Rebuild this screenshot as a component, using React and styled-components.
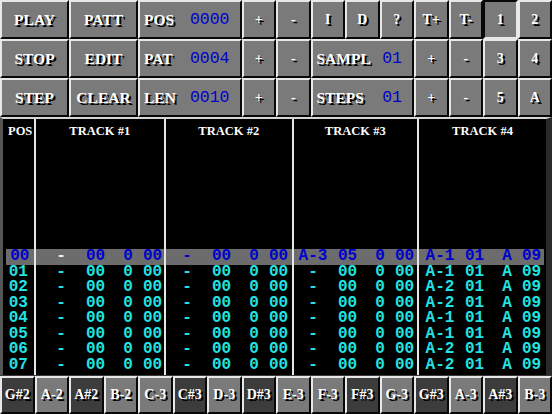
import React from "react";
import styled, { createGlobalStyle } from "styled-components";

const FACE = "#7a7a7a";
const LIGHT = "#e8e8e8";
const DARK = "#080808";
const CYAN = "#22e2e2";
const BLUE = "#0000cc";

const GlobalStyle = createGlobalStyle`
  html, body {
    margin: 0;
    padding: 0;
    background: #000;
  }
  body {
    width: 552px;
    height: 414px;
    overflow: hidden;
  }
`;

const Screen = styled.div`
  width: 552px;
  height: 414px;
  display: flex;
  flex-direction: column;
  background: #000;
  overflow: hidden;
`;

const ControlGrid = styled.div`
  display: grid;
  grid-template-columns: repeat(16, 34.5px);
  grid-template-rows: repeat(3, 39px);
  background: ${FACE};
`;

const Btn = styled.div`
  grid-column: span ${(p) => p.$span || 1};
  box-sizing: border-box;
  border-style: solid;
  border-width: 2px;
  border-color: ${(p) =>
    p.$pressed
      ? `${DARK} ${LIGHT} ${LIGHT} ${DARK}`
      : `${LIGHT} ${DARK} ${DARK} ${LIGHT}`};
  background: ${FACE};
  display: flex;
  align-items: center;
  justify-content: center;
  font-family: "Liberation Serif", serif;
  font-weight: 700;
  font-size: ${(p) => (p.$small ? 14 : 15.5)}px;
  color: #fff;
  text-shadow: 2px 2px 0 #000;
  white-space: nowrap;
`;

const ValueBox = styled(Btn)`
  justify-content: space-between;
  padding: 0 10px 0 4px;
`;

const Value = styled.span`
  font-family: "Liberation Mono", monospace;
  font-weight: 400;
  font-size: 16.5px;
  color: ${BLUE};
  text-shadow: none;
`;

const Pattern = styled.div`
  display: flex;
  height: 258px;
  box-sizing: border-box;
  border-top: 2px solid #d6d6d6;
  border-left: 3px solid #555;
  border-right: 6px solid #2a2a2a;
  background: #000;
`;

const Divider = styled.div`
  width: 2px;
  flex: none;
  background: #e6e6e6;
`;

const Column = styled.div`
  width: ${(p) => p.$w}px;
  flex: none;
  display: flex;
  flex-direction: column;
`;

const Header = styled.div`
  height: 130px;
  box-sizing: border-box;
  padding: 5px 0 0 ${(p) => (p.$left ? 5 : 0)}px;
  text-align: ${(p) => (p.$left ? "left" : "center")};
  font-family: "Liberation Serif", serif;
  font-weight: 700;
  font-size: 12.5px;
  line-height: 15px;
  color: #fff;
`;

const Row = styled.div`
  height: 15.5px;
  line-height: 15.5px;
  display: flex;
  justify-content: ${(p) => (p.$center ? "center" : "flex-start")};
  box-sizing: border-box;
  padding-left: ${(p) => p.$pad || 0}px;
  margin-left: ${(p) => p.$ml || 0}px;
  margin-right: ${(p) => p.$mr || 0}px;
  font-family: "Liberation Mono", monospace;
  font-weight: 700;
  font-size: 16px;
  color: ${(p) => (p.$current ? BLUE : CYAN)};
  background: ${(p) => (p.$current ? "#6c6c6c" : "transparent")};
  white-space: pre;
`;

const Cell = styled.span`
  flex: none;
  width: ${(p) => p.$w}px;
  margin-left: ${(p) => p.$ml || 0}px;
  text-align: ${(p) => (p.$center ? "center" : "left")};
  color: ${(p) => p.$color || "inherit"};
`;

const Keyboard = styled.div`
  display: grid;
  grid-template-columns: repeat(16, 34.5px);
  height: 39px;
  box-sizing: border-box;
  border-top: 1px solid #3a3a3a;
  background: #000;
`;

const Key = styled.div`
  box-sizing: border-box;
  border-style: solid;
  border-width: 2px;
  border-color: ${LIGHT} ${DARK} ${DARK} ${LIGHT};
  background: ${(p) => (p.$sharp ? "#3c3c3c" : FACE)};
  display: flex;
  align-items: center;
  justify-content: center;
  font-family: "Liberation Serif", serif;
  font-weight: 700;
  font-size: 14px;
  color: #fff;
  text-shadow: 2px 2px 0 #000;
  white-space: nowrap;
`;

const tracks = [
  { w: 128.5, pad: 10.5, notes: Array(8).fill(null) },
  { w: 125.5, pad: 6, notes: Array(8).fill(null) },
  { w: 123.5, pad: 4.5, notes: ["A-3", null, null, null, null, null, null, null], inst: ["05"] },
  { w: 127, pad: 6, notes: ["A-1", "A-1", "A-2", "A-2", "A-1", "A-1", "A-2", "A-2"], full: true },
];

const keys = ["G#2", "A-2", "A#2", "B-2", "C-3", "C#3", "D-3", "D#3", "E-3", "F-3", "F#3", "G-3", "G#3", "A-3", "A#3", "B-3"];

const TrackRow = ({ track, i, last, first }) => {
  const note = track.notes[i];
  const cur = i === 0;
  let inst = "00", fx = "0", param = "00";
  if (track.full) {
    inst = "01";
    fx = "A";
    param = "09";
  } else if (note) {
    inst = track.inst[0];
  }
  return (
    <Row $current={cur} $pad={track.pad} $mr={cur && last ? 2 : 0}>
      <Cell $w={30} $center $color={cur && first ? "#f0f0f0" : undefined}>
        {note || "-"}
      </Cell>
      <Cell $w={20} $ml={10}>{inst}</Cell>
      <Cell $w={10} $ml={17} $center>{fx}</Cell>
      <Cell $w={20} $ml={10}>{param}</Cell>
    </Row>
  );
};

export default function App() {
  const rows = [0, 1, 2, 3, 4, 5, 6, 7];
  return (
    <>
      <GlobalStyle />
      <Screen>
        <ControlGrid>
          <Btn $span={2}>PLAY</Btn>
          <Btn $span={2}>PATT</Btn>
          <ValueBox $span={3}>POS<Value>0000</Value></ValueBox>
          <Btn $small>+</Btn>
          <Btn $small>-</Btn>
          <Btn $small>I</Btn>
          <Btn $small>D</Btn>
          <Btn $small>?</Btn>
          <Btn $small>T+</Btn>
          <Btn $small>T-</Btn>
          <Btn $small $pressed>1</Btn>
          <Btn $small>2</Btn>

          <Btn $span={2}>STOP</Btn>
          <Btn $span={2}>EDIT</Btn>
          <ValueBox $span={3}>PAT<Value>0004</Value></ValueBox>
          <Btn $small>+</Btn>
          <Btn $small>-</Btn>
          <ValueBox $span={3}>SAMPL<Value>01</Value></ValueBox>
          <Btn $small>+</Btn>
          <Btn $small>-</Btn>
          <Btn $small>3</Btn>
          <Btn $small>4</Btn>

          <Btn $span={2}>STEP</Btn>
          <Btn $span={2}>CLEAR</Btn>
          <ValueBox $span={3}>LEN<Value>0010</Value></ValueBox>
          <Btn $small>+</Btn>
          <Btn $small>-</Btn>
          <ValueBox $span={3}>STEPS<Value>01</Value></ValueBox>
          <Btn $small>+</Btn>
          <Btn $small>-</Btn>
          <Btn $small>5</Btn>
          <Btn $small>A</Btn>
        </ControlGrid>

        <Pattern>
          <Column $w={30.5}>
            <Header $left>POS</Header>
            {rows.map((i) => (
              <Row key={i} $current={i === 0} $center $ml={i === 0 ? 3 : 0}>
                {"0" + i}
              </Row>
            ))}
          </Column>
          {tracks.map((t, n) => (
            <React.Fragment key={n}>
              <Divider />
              <Column $w={t.w}>
                <Header>TRACK #{n + 1}</Header>
                {rows.map((i) => (
                  <TrackRow key={i} track={t} i={i} first={n === 0} last={n === 3} />
                ))}
              </Column>
            </React.Fragment>
          ))}
        </Pattern>

        <Keyboard>
          {keys.map((k) => (
            <Key key={k} $sharp={k.includes("#")}>{k}</Key>
          ))}
        </Keyboard>
      </Screen>
    </>
  );
}
